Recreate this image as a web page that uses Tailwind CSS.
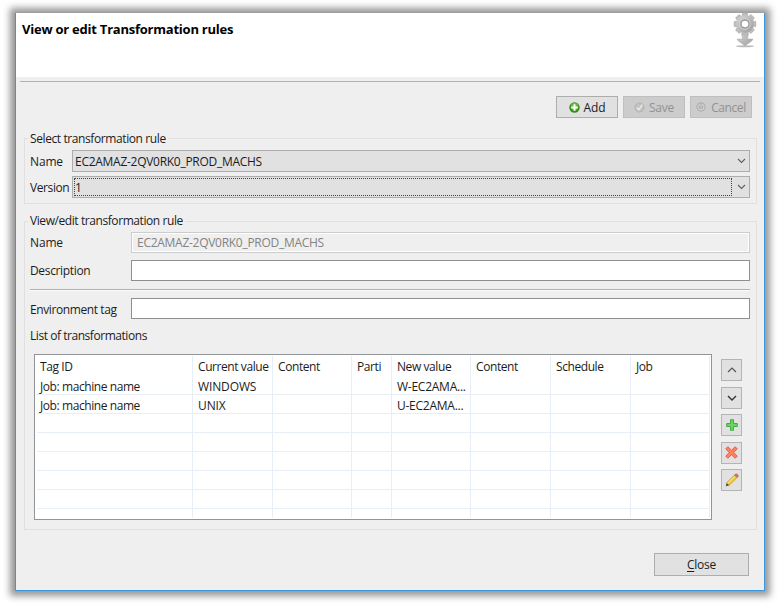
<!DOCTYPE html>
<html lang="en">
<head>
<meta charset="utf-8">
<title>Transformation rules</title>
<script src="https://cdn.jsdelivr.net/npm/@tailwindcss/browser@4"></script>
</head>
<body class="w-[780px] h-[604px] overflow-hidden bg-white pt-[13px] pl-[15px] font-['Open_Sans','Noto_Sans',sans-serif] text-[12px] leading-[16px] tracking-[-0.4px] text-[#1c1c1c]">
<main class="w-[750px] h-[578px] bg-[#efefef] border-x border-b border-[#3c97de] shadow-[0_0_7px_5px_#969696] flex flex-col">
  <header class="h-[64px] shrink-0 bg-white flex justify-between pl-[6px] pr-[6px]">
    <h1 class="font-bold text-black text-[13px] pt-[8px] tracking-[-0.23px] whitespace-nowrap">View or edit Transformation rules</h1>
    <svg class="w-[26px] h-[36px]" viewBox="0 0 26 36">
      <defs><linearGradient id="m" x1="0" y1="0" x2="1" y2="1"><stop offset="0" stop-color="#d8d8d8"/><stop offset="1" stop-color="#9c9c9c"/></linearGradient></defs>
      <ellipse cx="13" cy="33.300" rx="9" ry="1" fill="#bbb"/>
      <path d="M9.500 20h7l-1 6h5.500c-1 3-5 4-8 7-3-3-7-4-8-7h5.500z" fill="url(#m)" stroke="#aaa" stroke-width=".5"/>
      <g fill="#bdbdbd" stroke="#a5a5a5" stroke-width=".4"><path id="t" d="M10.500 0h5l.8 5h-6.600zM10.500 22h5l.8-5h-6.600z"/><use href="#t" transform="rotate(45 13 11)"/><use href="#t" transform="rotate(90 13 11)"/><use href="#t" transform="rotate(135 13 11)"/></g>
      <circle cx="13" cy="11" r="8.700" fill="url(#m)"/><circle cx="13" cy="11" r="5.300" fill="#9a9a9a" stroke="#e0e0e0" stroke-width=".8"/><circle cx="13" cy="11" r="3.300" fill="#fff"/>
    </svg>
  </header>
  <div class="mt-[4px] mx-[4px] h-px shrink-0 bg-[#b2b2b2]"></div>
  <div class="mt-[14px] h-[22px] shrink-0 flex justify-end gap-[5px] pr-[12px]">
    <button class="w-[62px] border border-[#adadad] bg-[#e1e1e1] flex items-center justify-center gap-[4px] tracking-[-0.1px]"><svg class="w-[11px] h-[11px]" viewBox="0 0 11 11"><circle cx="5.5" cy="5.5" r="5.2" fill="#389018"/><circle cx="5.5" cy="4.6" r="3.8" fill="#69b63c"/><path d="M5.5 2.3v6.4M2.3 5.5h6.4" stroke="#fff" stroke-width="2"/></svg><span class="pt-[2px]">Add</span></button>
    <button class="w-[62px] border border-[#bfbfbf] bg-[#cccccc] text-[#929292] flex items-center justify-center gap-[4px] tracking-[-0.2px]"><svg class="w-[11px] h-[11px]" viewBox="0 0 11 11"><circle cx="5.5" cy="5.5" r="4.5" fill="#c2c2c2" stroke="#b2b2b2"/><path d="M2.8 5.4l2 2.3 3.600-5" fill="none" stroke="#eee" stroke-width="1.300"/></svg><span class="pt-[2px]">Save</span></button>
    <button class="w-[62px] border border-[#bfbfbf] bg-[#cccccc] text-[#929292] flex items-center justify-center gap-[5px]"><svg class="w-[10px] h-[10px]" viewBox="0 0 11 11"><circle cx="5.5" cy="5.5" r="4.5" fill="#cfcfcf" stroke="#adadad" stroke-width="1.2"/><path d="M5.5 2v4M3.7 4.2v2.7h3.6V4.2" fill="none" stroke="#a8a8a8"/></svg><span class="pt-[2px]">Cancel</span></button>
  </div>

  <section class="relative mt-[20px] ml-[8px] w-[733px] h-[66px] shrink-0 border border-[#e0e0e0] pt-[11px] pl-[5px] flex flex-col gap-[4px]">
    <h2 class="absolute left-[3px] top-[-8px] px-[2px] bg-[#efefef] whitespace-nowrap">Select transformation rule</h2>
    <div class="flex items-center h-[22px]"><span class="w-[42px] pt-[2px] whitespace-nowrap tracking-[-0.15px]">Name</span><div class="w-[678px] h-[22px] border border-[#adadad] bg-[#e1e1e1] pl-[2px] pr-[3px] flex items-center justify-between"><span class="pt-[2px] tracking-[-0.28px]">EC2AMAZ-2QV0RK0_PROD_MACHS</span><svg class="w-[9px] h-[6px]" viewBox="0 0 9 6"><path d="M1 1l3.5 3.5L8 1" fill="none" stroke="#606060" stroke-width="1.1"/></svg></div></div>
    <div class="flex items-center h-[22px]"><span class="w-[42px] pt-[2px] whitespace-nowrap">Version</span><div class="w-[678px] h-[22px] border border-[#adadad] bg-[#e1e1e1] pl-[1px] pr-[3px] flex items-center justify-between"><div class="w-[658px] h-[18px] border border-dotted border-[#444] flex items-center pt-px">1</div><svg class="w-[9px] h-[6px]" viewBox="0 0 9 6"><path d="M1 1l3.5 3.5L8 1" fill="none" stroke="#606060" stroke-width="1.1"/></svg></div></div>
  </section>

  <section class="relative mt-[17px] ml-[8px] w-[733px] h-[309px] shrink-0 border border-[#e0e0e0] pt-[10px] pl-[5px] flex flex-col">
    <h2 class="absolute left-[3px] top-[-9px] px-[2px] bg-[#efefef] whitespace-nowrap tracking-[-0.42px]">View/edit transformation rule</h2>
    <div class="flex items-center h-[21px]"><span class="w-[101px] tracking-[-0.15px]">Name</span><div class="w-[619px] h-[21px] border border-[#cccccc] outline outline-white -outline-offset-2 flex items-center pl-[5px] text-[#838383] tracking-[-0.28px]">EC2AMAZ-2QV0RK0_PROD_MACHS</div></div>
    <div class="flex items-center h-[21px] mt-[7px]"><span class="w-[101px] pt-px tracking-[-0.34px]">Description</span><div class="w-[619px] h-[21px] border border-[#8f8f8f] bg-white"></div></div>
    <div class="mt-[8px] w-[720px] h-[2px] bg-[#b2b2b2] border-b border-[#fafafa]"></div>
    <div class="flex items-center h-[21px] mt-[7px]"><span class="w-[101px] pt-[2px] whitespace-nowrap">Environment tag</span><div class="w-[619px] h-[21px] border border-[#8f8f8f] bg-white"></div></div>
    <h3 class="mt-[9px] h-[16px] tracking-[-0.45px]">List of transformations</h3>
    <div class="mt-[10px] pl-[4px] flex gap-[9px]">
      <div class="w-[678px] h-[166px] border border-[#929598] bg-white pl-[2px] pt-px whitespace-nowrap overflow-hidden">
        <div class="grid grid-cols-[156px_80px_79px_40px_79px_80px_80px_79px] grid-rows-[20px_19px_19px_19px_19px_19px_19px_19px_9px] w-[673px] h-[162px] *:border-r *:border-[#e8eef5] *:overflow-hidden" id="grid"></div>
      </div>
      <div class="pt-[5px] flex flex-col gap-[5.6px]">
        <button class="w-[21px] h-[22px] border border-[#b4b4b4] bg-[#e1e1e1] flex items-center justify-center"><svg class="w-[10px] h-[8px]" viewBox="0 0 10 8"><path d="M1 6l4-4 4 4" fill="none" stroke="#555" stroke-width="1.2"/></svg></button>
        <button class="w-[21px] h-[22px] border border-[#b4b4b4] bg-[#e1e1e1] flex items-center justify-center"><svg class="w-[10px] h-[8px]" viewBox="0 0 10 8"><path d="M1 2l4 4 4-4" fill="none" stroke="#333" stroke-width="1.4"/></svg></button>
        <button class="w-[21px] h-[22px] border border-[#b4b4b4] bg-[#e1e1e1] flex items-center justify-center"><svg class="w-[12px] h-[12px]" viewBox="0 0 12 12"><path d="M4.500.7h3v3.800h3.800v3H7.500v3.800h-3V7.500H.7v-3h3.800z" fill="#6bd65c" stroke="#41ab4b"/></svg></button>
        <button class="w-[21px] h-[22px] border border-[#b4b4b4] bg-[#e1e1e1] flex items-center justify-center"><svg class="w-[13px] h-[13px]" viewBox="0 0 12 12"><path d="M.7 2.600L2.600.7 6 3.900 9.400.7l1.900 1.900L8.100 6l3.200 3.400-1.900 1.900L6 8.100l-3.400 3.200L.7 9.400 3.900 6z" fill="#ff8060" stroke="#ea5840" stroke-width=".9"/></svg></button>
        <button class="w-[21px] h-[22px] border border-[#b4b4b4] bg-[#e1e1e1] flex items-center justify-center"><svg class="w-[14px] h-[14px]" viewBox="0 0 14 14"><path d="M.8 13.200l.9-3.500 2.600 2.600z" fill="#444"/><path d="M1.700 9.700L9.600 2l2.500 2.500-7.800 7.800z" fill="#f6cd28" stroke="#b58418" stroke-width=".6"/><path d="M2.600 10.200l7.700-7.500" stroke="#ffec80"/><path d="M9.600 2l.9-.9c1.300-.9 3.400 1.100 2.500 2.500l-.9.9z" fill="#d87262" stroke="#984438" stroke-width=".5"/></svg></button>
      </div>
    </div>
  </section>
  <footer class="mt-[23px] pr-[15px] flex justify-end"><button class="w-[95px] h-[23px] border border-[#adadad] bg-[#e1e1e1] tracking-[-0.25px]"><span class="underline underline-offset-2">C</span>lose</button></footer>
</main>
<script>
const rows = [
  ["Tag ID", "Current value", "Content", "Parti", "New value", "Content", "Schedule", "Job"],
  ["Job: machine name", "WINDOWS", "", "", "W-EC2AMA...", "", "", ""],
  ["Job: machine name", "UNIX", "", "", "U-EC2AMA...", "", "", ""]
];
const grid = document.getElementById("grid");
for (let r = 0; r < 9; r++) for (let c = 0; c < 8; c++) {
  const cell = document.createElement("div");
  const row = r === 0 ? "pt-[3px]" : r === 8 ? "" : "border-b border-b-[#f1f3f5] pt-[3px] leading-[15px]";
  const column = c === 0 ? "pl-[3px]" : "pl-[5px]";
  const spacing = c === 4 && r > 0 ? "tracking-[-0.25px]" : c === 1 && r > 0 ? "tracking-[-0.12px]" : "tracking-[-0.42px]";
  cell.className = `${row} ${column} ${spacing}`;
  cell.textContent = rows[r]?.[c] ?? "";
  grid.append(cell);
}
</script>
</body>
</html>
